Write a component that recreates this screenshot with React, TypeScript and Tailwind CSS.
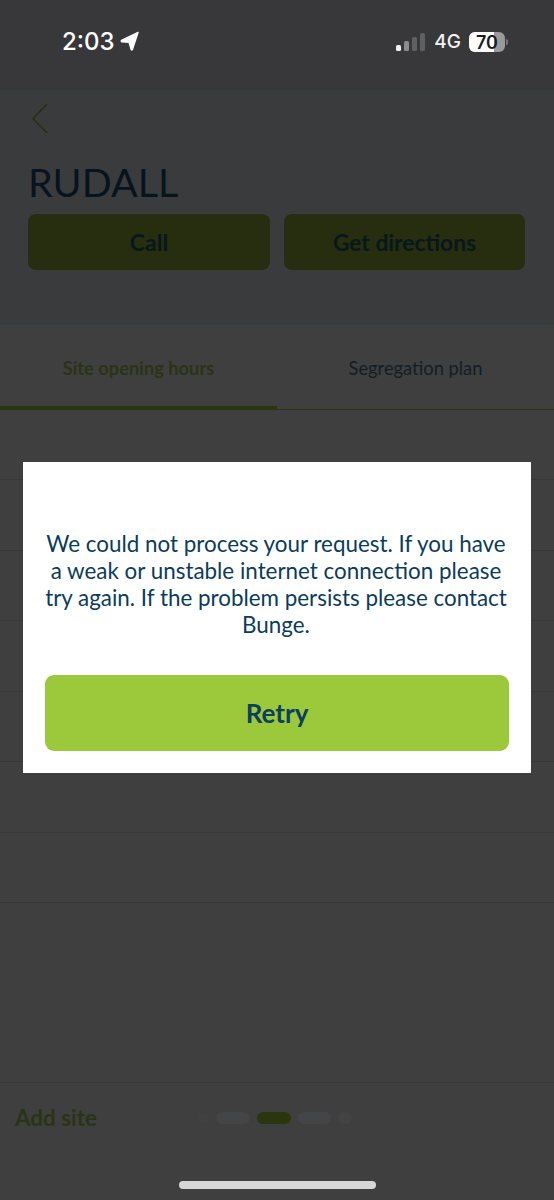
const rowLines = [71, 70, 71, 70, 71, 70]

function LocationArrow() {
  return (
    <svg width="19" height="20" viewBox="0 0 19 20" className="ml-[5px] -mt-[2px]">
      <path d="M18 1.5 L1.5 9.5 Q0.8 10.4 1.8 10.8 L9 11.2 L11.2 18.6 Q11.8 19.4 12.4 18.6 Z" fill="#ffffff" stroke="#ffffff" strokeWidth="1.4" strokeLinejoin="round" />
    </svg>
  )
}

function Signal() {
  return (
    <div className="flex items-end gap-[3px] h-[18px]">
      <div className="w-[5px] h-[6px] rounded-[1.5px] bg-[#f2f2f2]" />
      <div className="w-[5px] h-[10px] rounded-[1.5px] bg-[#8c8c8e]" />
      <div className="w-[5px] h-[14px] rounded-[1.5px] bg-[#5f6062]" />
      <div className="w-[5px] h-[18px] rounded-[1.5px] bg-[#5f6062]" />
    </div>
  )
}

function Battery() {
  return (
    <div className="flex items-center gap-[1px]">
      <div className="relative w-[36px] h-[20px] rounded-[6px] overflow-hidden bg-[#9a9a9b] flex">
        <div className="w-[25px] bg-white" />
        <span className="absolute inset-0 flex items-center justify-center text-[18px] font-semibold text-[#1c1c1e] [font-family:Inter,sans-serif]">70</span>
      </div>
      <div className="w-[2px] h-[6px] rounded-r-[2px] bg-[#77787a]" />
    </div>
  )
}

export default function App() {
  return (
    <div className="relative w-[554px] h-[1200px] overflow-hidden bg-[#3f3f3f] [font-family:Lato,sans-serif]">
      {/* Dimmed page */}
      <div className="h-[325px] bg-[#3a3b3d] flex flex-col">
        <div className="h-[90px] bg-[#38383a] flex items-start justify-between pt-[28px] pl-[62px] pr-[46px]">
          <div className="flex items-center">
            <span className="text-[24px] leading-[28px] font-medium text-white [font-family:Inter,sans-serif]">2:03</span>
            <LocationArrow />
          </div>
          <div className="flex items-center h-[28px]">
            <Signal />
            <span className="ml-[9px] mr-[8px] text-[19px] font-medium text-[#f2f2f2] [font-family:Inter,sans-serif]">4G</span>
            <Battery />
          </div>
        </div>

        <div className="px-[28px]">
          <svg width="18" height="32" viewBox="0 0 18 32" className="ml-[3px] mt-[13px]">
            <path d="M16 1 L2 15.5 L16 30" fill="none" stroke="#262d10" strokeWidth="1.3" />
          </svg>
          <h1 className="mt-[22px] text-[39.5px] leading-[50px] font-normal text-[#07141e]">RUDALL</h1>
          <div className="mt-[7px] flex gap-[14px]">
            <div className="w-[242px] h-[56px] rounded-[8px] bg-[#272d0f] flex items-center justify-center text-[23px] font-bold text-[#08171c]">Call</div>
            <div className="w-[241px] h-[56px] rounded-[8px] bg-[#272d0f] flex items-center justify-center text-[22.8px] font-bold text-[#08171c]">Get directions</div>
          </div>
        </div>
      </div>

      <div className="h-[85px] flex border-b border-[#2c3315]">
        <div className="w-[277px] -mb-[1px] border-b-[4px] border-[#2b360f] flex items-center justify-center pt-[7px]">
          <span className="text-[18.3px] font-bold text-[#2b3316]">Site opening hours</span>
        </div>
        <div className="flex-1 flex items-center justify-center pt-[3px]">
          <span className="text-[18.3px] text-[#131d26]">Segregation plan</span>
        </div>
      </div>

      <div className="h-[70px] border-b border-[#383838]" />
      {rowLines.map((h, i) => (
        <div key={i} style={{ height: h }} className="border-b border-[#383838]" />
      ))}

      <div className="h-[179px]" />

      <div className="h-[118px] border-t border-[#383838] relative">
        <div className="pl-[15px] pt-[17px] text-[22.4px] leading-[36px] font-bold text-[#2b3316]">Add site</div>
        <div className="absolute left-[198px] top-[29px] flex items-center gap-[7px]">
          <div className="w-[11px] h-[11px] rounded-full bg-[#414142]" />
          <div className="w-[34px] h-[12px] rounded-full bg-[#444547]" />
          <div className="w-[34px] h-[12px] rounded-full bg-[#2b350e]" />
          <div className="w-[33px] h-[12px] rounded-full bg-[#444547]" />
          <div className="w-[14px] h-[12px] rounded-full bg-[#434344]" />
        </div>
      </div>

      {/* Home indicator */}
      <div className="absolute left-[179px] top-[1181px] w-[197px] h-[8px] rounded-full bg-[#d6d6d6]" />

      {/* Error dialog */}
      <div className="absolute left-[23px] top-[462px] w-[508px] h-[311px] bg-white pl-[21px] pr-[23px] pt-[68px]">
        <p className="text-center text-[22.4px] leading-[27px] text-[#0b3c5a]">
          We could not process your request. If you have a weak or unstable internet connection please try again. If the problem persists please contact Bunge.
        </p>
        <button type="button" className="ml-[1px] mt-[37px] w-[464px] h-[76px] rounded-[9px] bg-[#9cc83c] text-[26px] font-bold text-[#0b3f5c]">
          Retry
        </button>
      </div>
    </div>
  )
}
